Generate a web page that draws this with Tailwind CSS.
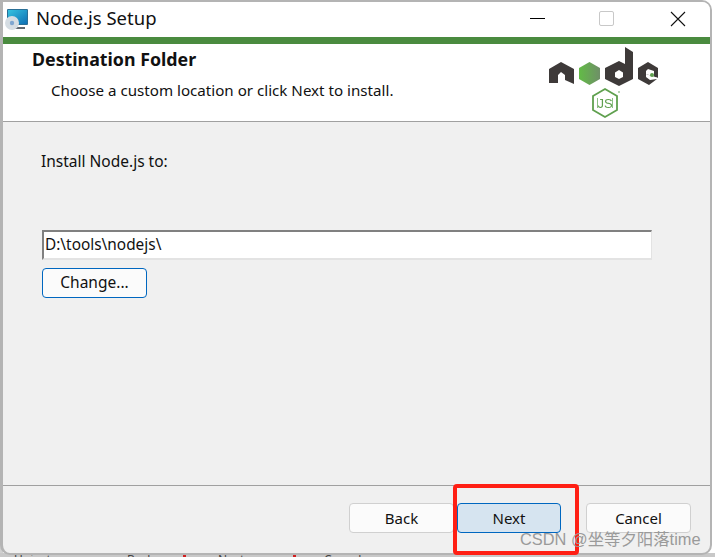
<!DOCTYPE html>
<html lang="en">
<head>
<meta charset="UTF-8">
<title>Node.js Setup</title>
<script src="https://cdn.jsdelivr.net/npm/@tailwindcss/browser@4"></script>
</head>
<body class="bg-white">
<div class="relative w-[715px] h-[557px] overflow-hidden bg-white font-['Noto_Sans',sans-serif] text-[#111]">

  <!-- window behind, only slivers show -->
  <div class="absolute left-0 top-0 w-[3px] h-[557px] bg-[#d0d0d0]">
    <div class="mt-[146px] h-[6px] bg-[#5a9a50]"></div>
    <div class="mt-[14px] h-[8px] bg-[#33415a]"></div>
    <div class="mt-[14px] h-[10px] bg-[#7a3a50]"></div>
    <div class="mt-[58px] h-[14px] bg-[#8a6a30]"></div>
    <div class="mt-[28px] h-[14px] bg-[#4a80c0]"></div>
    <div class="mt-[24px] h-[14px] bg-[#444]"></div>
    <div class="mt-[62px] h-[12px] bg-[#777]"></div>
  </div>
  <div class="absolute left-0 top-[553px] w-[715px] h-[4px] bg-[#c8c8c8] text-[12px] leading-none text-[#444]">
    <span class="absolute left-[14px] top-[1px]">Uninst</span>
    <span class="absolute left-[127px] top-[1px]">Back</span>
    <div class="absolute left-[183px] top-0 w-[3px] h-[4px] bg-[#d02020]"></div>
    <span class="absolute left-[218px] top-[1px]">Next</span>
    <div class="absolute left-[293px] top-0 w-[3px] h-[4px] bg-[#d02020]"></div>
    <span class="absolute left-[324px] top-[1px]">Cancel</span>
  </div>

  <!-- setup window -->
  <div class="absolute left-0 top-0 w-[712px] h-[555px] rounded-tr-[10px] rounded-bl-[10px] rounded-br-[10px] border-t-2 border-l-[3px] border-r-2 border-b-2 border-[#b4b4b4] bg-[#f0f0f0] overflow-hidden flex flex-col">

    <div class="h-[35px] shrink-0 bg-white flex items-center pb-[2px]">
      <svg class="ml-[1px] w-[24px] h-[24px] shrink-0" viewBox="0 0 24 24">
        <defs>
          <linearGradient id="screen" x1="0" y1="0" x2="1" y2="1">
            <stop offset="0" stop-color="#35c3e0"/>
            <stop offset="1" stop-color="#0f6fb4"/>
          </linearGradient>
        </defs>
        <rect x="3" y="2" width="21" height="16" rx="1" fill="#2a6f96"/>
        <rect x="4" y="3" width="19" height="14" fill="url(#screen)"/>
        <rect x="9" y="20" width="12" height="2" fill="#606870"/>
        <circle cx="8" cy="16" r="7" fill="#d5dde3"/>
        <circle cx="8" cy="16" r="2.2" fill="#7fa6d0"/>
      </svg>
      <span class="ml-[8px] text-[18.5px] leading-none text-[#111]">Node.js Setup</span>
      <div class="ml-auto flex items-center">
        <div class="w-[15px] h-px bg-black mr-[54px]"></div>
        <div class="w-[15px] h-[15px] rounded-[2px] border border-[#c8c8c8] mr-[56px]"></div>
        <svg class="w-[16px] h-[16px] mr-[24px]" viewBox="0 0 16 16">
          <path d="M1 1 L15 15 M15 1 L1 15" stroke="#111" stroke-width="1.1" fill="none"/>
        </svg>
      </div>
    </div>

    <div class="h-[7px] shrink-0 bg-[#4a8b3f]"></div>

    <div class="h-[78px] shrink-0 bg-white border-b border-[#a0a0a0] flex justify-between">
      <div>
        <h1 class="ml-[29px] mt-[4px] text-[17.8px] leading-[22px] font-bold">Destination Folder</h1>
        <p class="ml-[48px] mt-[10px] text-[15.15px] leading-[20px]">Choose a custom location or click Next to install.</p>
      </div>
      <svg class="w-[130px] h-[77px] shrink-0 mr-[40px] blur-[0.4px]" viewBox="0 0 130 77">
        <defs>
          <linearGradient id="hexgreen" x1="0" y1="0" x2="1" y2="0">
            <stop offset="0" stop-color="#62bb46"/>
            <stop offset="1" stop-color="#6f8f68"/>
          </linearGradient>
        </defs>
        <path d="M9 39 V25 L21 18 L34 25 V40 L25 36 V31 L21 28 L18 31 V39 Z" fill="#3e3a39"/>
        <polygon points="49.5,18 60,24 60,35 49.5,41 39,35 39,24" fill="url(#hexgreen)"/>
        <path d="M85 3 L93 8 V35 L79 42 L65 35 V24 L79 17 L85 20 Z M79 26 L75 28.500 V33 L79 35 L83 33 V28.500 Z" fill="#3e3a39" fill-rule="evenodd"/>
        <path d="M108 18 L118 24 V34 L106 30 V33 L110 36 L117 35 L109 41 L98 35 V24 Z" fill="#3e3a39"/>
        <polygon points="108,25 106,27 106,30 118,34 118,35 114,33 114,27" fill="#ffffff"/>
        <circle cx="112" cy="31" r="2" fill="#5fa04e"/>
        <polygon points="65,45 77,52 77,66 65,73 53,66 53,52" fill="none" stroke="#5fa04e" stroke-width="1.8"/>
        <path d="M57.500 54 V64 M72.500 54 V64" stroke="#8cc084" stroke-width="1" fill="none"/>
        <text x="65" y="64" text-anchor="middle" font-family="Liberation Sans" font-size="13" fill="#5fa04e">JS</text>
        <circle cx="79" cy="48" r="1" fill="#9fc79a"/>
      </svg>
    </div>

    <div class="flex-1 min-h-0 border-b border-[#a0a0a0] pl-[39px]">
      <p class="-ml-[1px] mt-[29px] text-[15.5px] leading-[20px]">Install Node.js to:</p>
      <div class="mt-[59px] w-[610px] h-[30px] bg-white border-t-2 border-l-2 border-b-2 border-r border-t-[#808080] border-l-[#808080] border-b-[#e3e3e3] border-r-[#e3e3e3] flex items-center pl-[1px] text-[15.4px]">D:\tools\nodejs\</div>
      <button class="mt-[8px] w-[105px] h-[30px] rounded-[4px] border border-[#0067c0] bg-[#fbfbfb] text-[15.5px] text-center">Change...</button>
    </div>

    <div class="h-[67px] shrink-0 flex pl-[346px] pt-[17px] text-[15px]">
      <button class="w-[105px] h-[30px] rounded-[4px] border border-[#d0d0d0] bg-[#fbfbfb]">Back</button>
      <button class="ml-[3px] w-[104px] h-[30px] rounded-[4px] border border-[#0067c0] bg-[#d6e4f0]">Next</button>
      <button class="ml-[25px] w-[105px] h-[30px] rounded-[4px] border border-[#d0d0d0] bg-[#fbfbfb]">Cancel</button>
    </div>
  </div>

  <!-- annotation + watermark over the screenshot -->
  <div class="absolute left-[453px] top-[484px] w-[126px] h-[71px] rounded-[4px] border-[4px] border-[#ff1f14]"></div>
  <div class="absolute left-[520px] top-[529px] text-[16.4px] leading-[20px] text-[#9a9a9a] font-['Liberation_Sans','Noto_Sans_CJK_SC',sans-serif] whitespace-nowrap">CSDN @坐等夕阳落time</div>
</div>
</body>
</html>
